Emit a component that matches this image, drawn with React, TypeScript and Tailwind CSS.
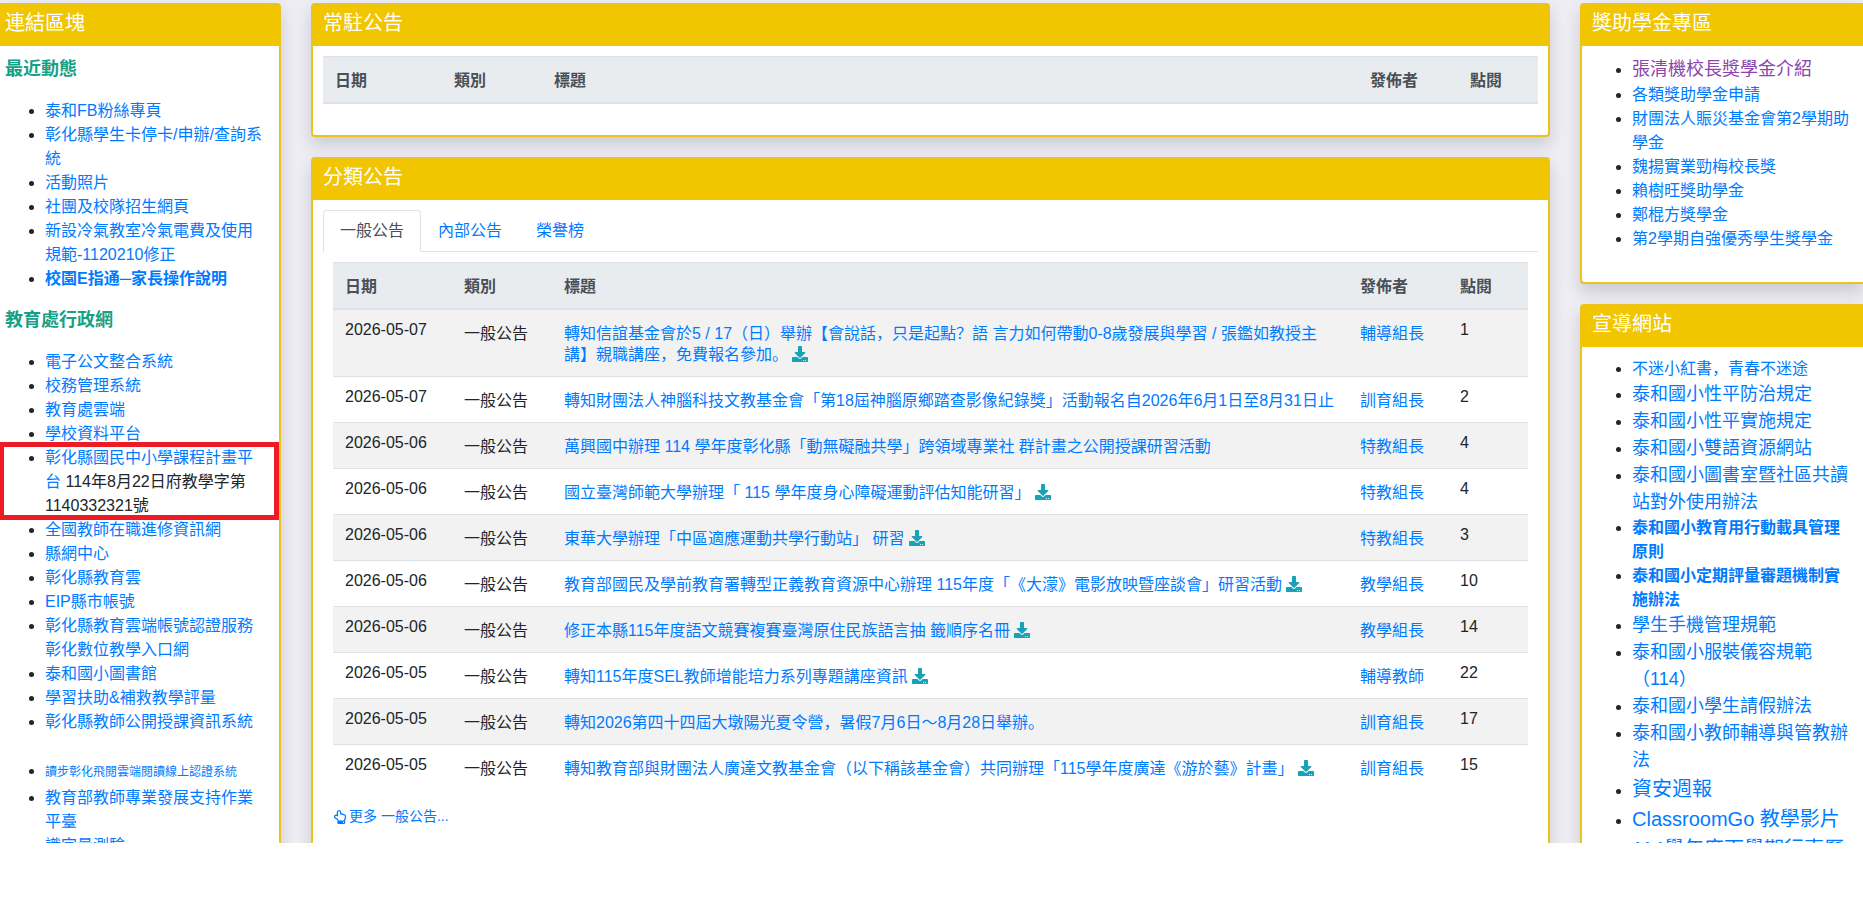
import React, { useState } from 'react';
import { FaDownload, FaRegHandPointUp } from 'react-icons/fa';

interface LinkItem {
  label: string;
  note?: string;
  /** 文字樣式（大小、行高、粗細、顏色） */
  className?: string;
  gapBefore?: boolean;
  marked?: boolean;
}

interface Notice {
  date: string;
  title: string;
  author: string;
  clicks: number;
  file?: boolean;
}

const recentLinks: LinkItem[] = [
  { label: '泰和FB粉絲專頁' },
  { label: '彰化縣學生卡停卡/申辦/查詢系統' },
  { label: '活動照片' },
  { label: '社團及校隊招生網頁' },
  { label: '新設冷氣教室冷氣電費及使用規範-1120210修正' },
  { label: '校園E指通─家長操作說明', className: 'font-bold' },
];

const officeLinks: LinkItem[] = [
  { label: '電子公文整合系統' },
  { label: '校務管理系統' },
  { label: '教育處雲端' },
  { label: '學校資料平台' },
  { label: '彰化縣國民中小學課程計畫平台', note: '114年8月22日府教學字第1140332321號', marked: true },
  { label: '全國教師在職進修資訊網' },
  { label: '縣網中心' },
  { label: '彰化縣教育雲' },
  { label: 'EIP縣市帳號' },
  { label: '彰化縣教育雲端帳號認證服務彰化數位教學入口網' },
  { label: '泰和國小圖書館' },
  { label: '學習扶助&補救教學評量' },
  { label: '彰化縣教師公開授課資訊系統' },
  { label: '讀步彰化飛閱雲端閱讀線上認證系統', className: 'text-xs leading-7', gapBefore: true },
  { label: '教育部教師專業發展支持作業平臺' },
  { label: '識字量測驗' },
];

const scholarshipLinks: LinkItem[] = [
  { label: '張清機校長獎學金介紹', className: 'text-lg leading-[27px] text-[#8e44ad]' },
  { label: '各類獎助學金申請' },
  { label: '財團法人賑災基金會第2學期助學金' },
  { label: '魏揚實業勁梅校長獎' },
  { label: '賴樹旺獎助學金' },
  { label: '鄭棍方獎學金' },
  { label: '第2學期自強優秀學生獎學金' },
];

const large = 'text-lg leading-[27px]';
const xlarge = 'text-xl leading-[30px]';

const campaignLinks: LinkItem[] = [
  { label: '不迷小紅書，青春不迷途' },
  { label: '泰和國小性平防治規定', className: large },
  { label: '泰和國小性平實施規定', className: large },
  { label: '泰和國小雙語資源網站', className: large },
  { label: '泰和國小圖書室暨社區共讀站對外使用辦法', className: large },
  { label: '泰和國小教育用行動載具管理原則', className: 'font-bold' },
  { label: '泰和國小定期評量審題機制實施辦法', className: 'font-bold' },
  { label: '學生手機管理規範', className: large },
  { label: '泰和國小服裝儀容規範（114）', className: large },
  { label: '泰和國小學生請假辦法', className: large },
  { label: '泰和國小教師輔導與管教辦法', className: large },
  { label: '資安週報', className: xlarge },
  { label: 'ClassroomGo 教學影片', className: xlarge },
  { label: '114學年度下學期行事曆', className: xlarge },
];

const notices: Notice[] = [
  { date: '2026-05-07', title: '轉知信誼基金會於5 / 17（日）舉辦【會說話，只是起點？語 言力如何帶動0-8歲發展與學習 / 張鑑如教授主講】親職講座，免費報名參加。', author: '輔導組長', clicks: 1, file: true },
  { date: '2026-05-07', title: '轉知財團法人神腦科技文教基金會「第18屆神腦原鄉踏查影像紀錄獎」活動報名自2026年6月1日至8月31日止', author: '訓育組長', clicks: 2 },
  { date: '2026-05-06', title: '萬興國中辦理 114 學年度彰化縣「動無礙融共學」跨領域專業社 群計畫之公開授課研習活動', author: '特教組長', clicks: 4 },
  { date: '2026-05-06', title: '國立臺灣師範大學辦理「 115 學年度身心障礙運動評估知能研習」', author: '特教組長', clicks: 4, file: true },
  { date: '2026-05-06', title: '東華大學辦理「中區適應運動共學行動站」 研習', author: '特教組長', clicks: 3, file: true },
  { date: '2026-05-06', title: '教育部國民及學前教育署轉型正義教育資源中心辦理 115年度「《大濛》電影放映暨座談會」研習活動', author: '教學組長', clicks: 10, file: true },
  { date: '2026-05-06', title: '修正本縣115年度語文競賽複賽臺灣原住民族語言抽 籤順序名冊', author: '教學組長', clicks: 14, file: true },
  { date: '2026-05-05', title: '轉知115年度SEL教師增能培力系列專題講座資訊', author: '輔導教師', clicks: 22, file: true },
  { date: '2026-05-05', title: '轉知2026第四十四屆大墩陽光夏令營，暑假7月6日～8月28日舉辦。', author: '訓育組長', clicks: 17 },
  { date: '2026-05-05', title: '轉知教育部與財團法人廣達文教基金會（以下稱該基金會）共同辦理「115學年度廣達《游於藝》計畫」', author: '訓育組長', clicks: 15, file: true },
];

const tabs = ['一般公告', '內部公告', '榮譽榜'];

function Card({
  title,
  className = '',
  headClass = 'px-2.5',
  bodyClass = 'px-2.5',
  children,
}: {
  title: string;
  className?: string;
  headClass?: string;
  bodyClass?: string;
  children: React.ReactNode;
}) {
  return (
    <section className={`rounded border-2 border-[#ebc31c] bg-white shadow-[0_8px_16px_rgba(0,0,20,0.15)] ${className}`}>
      <h3 className={`bg-[#f1c500] pt-[3px] pb-2 text-xl leading-[30px] text-white ${headClass}`}>{title}</h3>
      <div className={`pt-2.5 pb-[15px] ${bodyClass}`}>{children}</div>
    </section>
  );
}

function LinkList({ items }: { items: LinkItem[] }) {
  return (
    <ul className="mb-4 list-disc pl-10">
      {items.map((item) => (
        <li key={item.label} className={`relative ${item.gapBefore ? 'mt-6' : ''}`}>
          <a href="#" className={`hover:underline ${item.className?.includes('leading') ? 'block' : ''} ${item.className ?? ''} ${item.className?.includes('text-[#') ? '' : 'text-[#007bff]'}`}>
            {item.label}
          </a>
          {item.note && <span> {item.note}</span>}
          {/* 重點標示框 */}
          {item.marked && (
            <span className="pointer-events-none absolute -top-1 -right-3 -bottom-0.5 -left-[45px] border-5 border-l-4 border-[#ed1c24]" />
          )}
        </li>
      ))}
    </ul>
  );
}

function NoticeTable({ rows }: { rows: Notice[] }) {
  return (
    <table className="mb-4 w-full table-fixed leading-[21px]">
      <colgroup>
        <col className="w-[119px]" />
        <col className="w-25" />
        <col />
        <col className="w-25" />
        <col className="w-20" />
      </colgroup>
      <thead>
        <tr className="border-t border-b-2 border-[#dee2e6] bg-[#e9ecef] text-left text-[#495057]">
          {['日期', '類別', '標題', '發佈者', '點閱'].map((name) => (
            <th key={name} scope="col" className="px-3 pt-[13px] pb-[11px] font-bold">
              {name}
            </th>
          ))}
        </tr>
      </thead>
      <tbody>
        {rows.map((row, i) => (
          <tr key={row.title} className={`align-top odd:bg-[#f2f2f2] ${i > 0 ? 'border-t border-[#dee2e6]' : ''}`}>
            <td className="p-3 leading-4">{row.date}</td>
            <td className="px-3 pt-[13px] pb-[11px]">一般公告</td>
            <td className="px-3 pt-[13px] pb-[11px]">
              <a href="#" className="text-[#007bff] hover:underline">
                {row.title}
              </a>
              {row.file && (
                <>
                  {' '}
                  <FaDownload className="inline align-[-2px] text-[#17a2b8]" />
                </>
              )}
            </td>
            <td className="px-3 pt-[13px] pb-[11px]">
              <a href="#" className="text-[#007bff] hover:underline">
                {row.author}
              </a>
            </td>
            <td className="p-3 leading-4">{row.clicks}</td>
          </tr>
        ))}
      </tbody>
    </table>
  );
}

export default function App() {
  const [active, setActive] = useState(0);

  return (
    <div className="min-h-screen bg-white font-['Liberation_Sans','Noto_Sans_CJK_SC',sans-serif] text-base text-[#212529] [text-spacing-trim:space-all]">
      <div className="grid h-[calc(100vh-73px)] grid-cols-[281px_minmax(0,1fr)_283px] gap-x-[30px] overflow-hidden bg-[#ededf3] pt-[3px]">
        {/* 左側連結區 */}
        <aside>
          <Card title="連結區塊" className="rounded-l-none border-l-0" headClass="pl-[5px]" bodyClass="pl-[5px] pr-3">
            <h4 className="mb-4 text-lg leading-[27px] font-bold text-[#16a085]">最近動態</h4>
            <LinkList items={recentLinks} />
            <h4 className="mb-4 text-lg leading-[27px] font-bold text-[#16a085]">教育處行政網</h4>
            <LinkList items={officeLinks} />
          </Card>
        </aside>

        {/* 中間公告區 */}
        <main className="flex flex-col gap-5">
          <Card title="常駐公告">
            <NoticeTable rows={[]} />
          </Card>
          <Card title="分類公告" className="grow rounded-b-none border-b-0">
            <div role="tablist" className="flex border-b border-[#dee2e6]">
              {tabs.map((tab, i) => (
                <button
                  key={tab}
                  type="button"
                  role="tab"
                  aria-selected={i === active}
                  onClick={() => setActive(i)}
                  className={`-mb-px rounded-t border px-4 py-2 leading-6 ${
                    i === active ? 'border-[#dee2e6] border-b-white bg-white text-[#495057]' : 'border-transparent text-[#007bff]'
                  }`}
                >
                  {tab}
                </button>
              ))}
            </div>
            <div className="p-2.5">
              <NoticeTable rows={notices} />
              <a href="#" className="flex items-center gap-0.5 text-sm leading-[21px] text-[#007bff] hover:underline">
                <FaRegHandPointUp className="text-sm" />
                更多 一般公告...
              </a>
            </div>
          </Card>
        </main>

        {/* 右側專區 */}
        <aside className="flex flex-col gap-5">
          <Card title="獎助學金專區" className="rounded-r-none border-r-0">
            <LinkList items={scholarshipLinks} />
          </Card>
          <Card title="宣導網站" className="rounded-r-none border-r-0">
            <LinkList items={campaignLinks} />
          </Card>
        </aside>
      </div>
    </div>
  );
}
